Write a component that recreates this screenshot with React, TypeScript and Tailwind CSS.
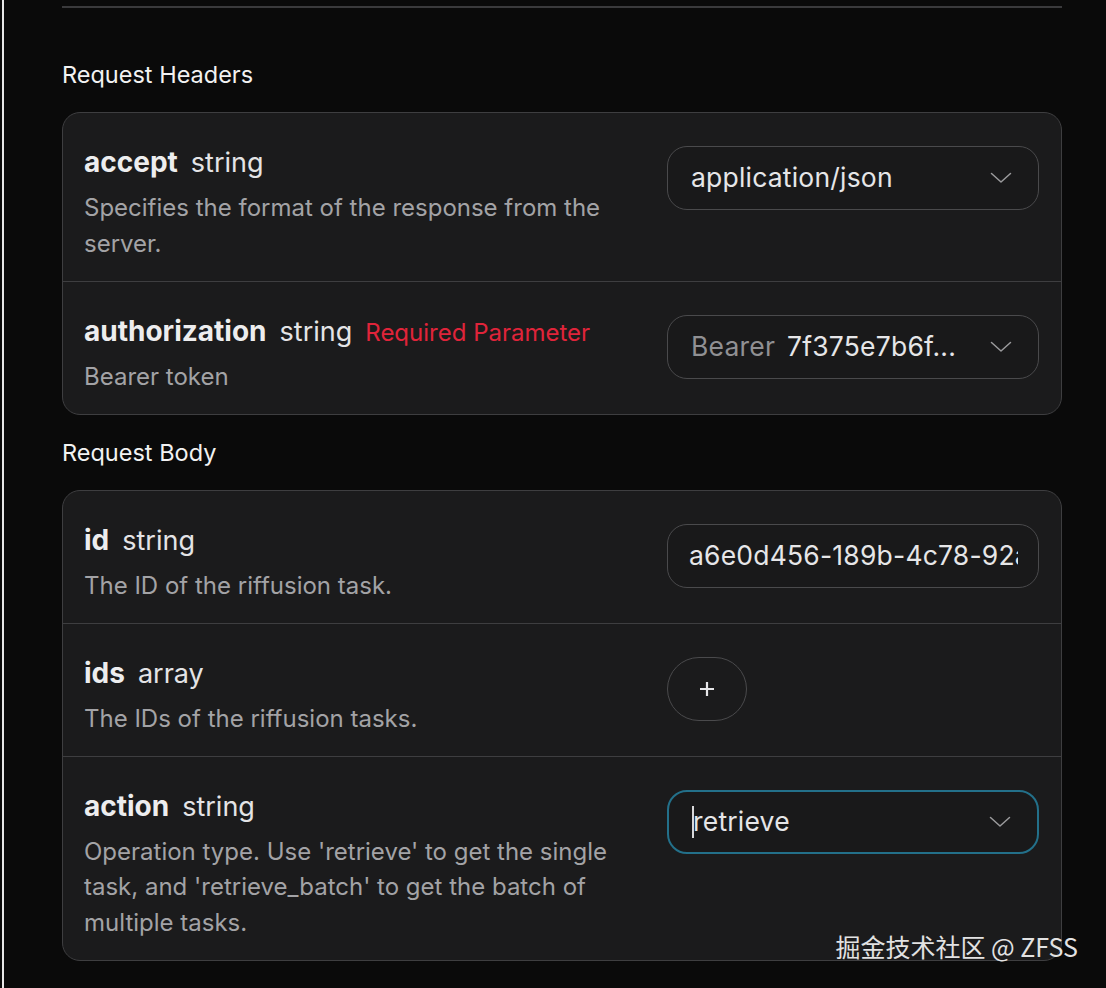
import React from "react";

function Chevron() {
  return (
    <svg width="22" height="12" viewBox="0 0 22 12" fill="none" className="shrink-0">
      <polyline points="1.5,1.5 11,10 20.5,1.5" stroke="#9a9a9c" strokeWidth="1.5" strokeLinecap="round" strokeLinejoin="round" />
    </svg>
  );
}

function Row({
  name,
  type,
  required,
  desc,
  control,
  last,
}: {
  name: string;
  type: string;
  required?: boolean;
  desc: string;
  control: React.ReactNode;
  last?: boolean;
}) {
  return (
    <div className={"flex items-start pl-[21px] pr-[22px] pt-[33px] pb-[19.5px] " + (last ? "" : "border-b border-[#3e3e40]")}>
      <div className="w-[560px] shrink-0">
        <div className="flex items-baseline h-[32px] leading-[32px] whitespace-nowrap">
          <span className="text-[28px] font-bold text-[#ededee]">{name}</span>
          <span className="ml-[13px] text-[27px] text-[#e4e4e6]">{type}</span>
          {required && <span className="ml-[13px] text-[24px] text-[#e0243a]">Required Parameter</span>}
        </div>
        <div className="mt-[12px] text-[24px] leading-[35.5px] text-[#a3a3a6]">{desc}</div>
      </div>
      <div className="ml-auto">{control}</div>
    </div>
  );
}

function Select({ children, focused }: { children: React.ReactNode; focused?: boolean }) {
  return (
    <div
      className={
        "w-[372px] h-[64px] rounded-[20px] flex items-center pl-[23px] pr-[26px] bg-[#19191a] " +
        (focused ? "border-2 border-[#23708a]" : "border border-[#4a4a4c]")
      }
    >
      <div className="flex-1 min-w-0 flex items-center text-[26.5px] tracking-[0.2px] text-[#e6e6e8] whitespace-nowrap overflow-hidden">{children}</div>
      <Chevron />
    </div>
  );
}

export default function App() {
  return (
    <div
      className="relative w-[1106px] h-[988px] bg-[#0a0a0a] overflow-hidden pl-[2px]"
      style={{ fontFamily: "Inter, 'Noto Sans', 'Noto Sans CJK SC', sans-serif" }}
    >
      <div className="h-full border-l-2 border-[#e8e8e8]">
        <div className="ml-[58px] w-[1000px]">
          <div className="pt-[6px]">
            <div className="h-[2px] bg-[#3a3a3c]" />
          </div>

          <div className="mt-[53px] h-[28px] leading-[28px] text-[23.5px] text-[#f2f2f2]">Request Headers</div>
          <div className="mt-[23px] rounded-[18px] border border-[#3e3e40] bg-[#1b1b1c]">
            <Row
              name="accept"
              type="string"
              desc="Specifies the format of the response from the server."
              control={
                <Select>
                  <span>application/json</span>
                </Select>
              }
            />
            <Row
              name="authorization"
              type="string"
              required
              desc="Bearer token"
              last
              control={
                <Select>
                  <span className="text-[#909093]">Bearer</span>
                  <span className="ml-[12px]">7f375e7b6f...</span>
                </Select>
              }
            />
          </div>

          <div className="mt-[24px] h-[28px] leading-[28px] text-[23.5px] text-[#f2f2f2]">Request Body</div>
          <div className="mt-[23px] rounded-[18px] border border-[#3e3e40] bg-[#1b1b1c]">
            <Row
              name="id"
              type="string"
              desc="The ID of the riffusion task."
              control={
                <div className="w-[372px] h-[64px] rounded-[20px] border border-[#4a4a4c] bg-[#19191a] pl-[21px] pr-[20px] flex items-center">
                  <input
                    readOnly
                    value="a6e0d456-189b-4c78-92a1-3f0e"
                    className="w-full bg-transparent outline-none text-[26.5px] tracking-[0.2px] text-[#e6e6e8]"
                    style={{ fontFamily: "Inter, sans-serif" }}
                  />
                </div>
              }
            />
            <Row
              name="ids"
              type="array"
              desc="The IDs of the riffusion tasks."
              control={
                <div className="w-[372px]">
                  <div className="w-[80px] h-[64px] rounded-full border border-[#4a4a4c] flex items-center justify-center">
                    <svg width="18" height="18" viewBox="0 0 18 18">
                      <path d="M9 2v14M2 9h14" stroke="#e6e6e8" strokeWidth="2.2" />
                    </svg>
                  </div>
                </div>
              }
            />
            <Row
              name="action"
              type="string"
              desc="Operation type. Use 'retrieve' to get the single task, and 'retrieve_batch' to get the batch of multiple tasks."
              last
              control={
                <Select focused>
                  <span className="inline-block w-[2px] h-[32px] bg-[#d8d8da] -mr-[1px]" />
                  <span>retrieve</span>
                </Select>
              }
            />
          </div>
        </div>
      </div>

      <div className="absolute right-[28px] top-[928px] text-[25px] leading-[36px] text-[#e2e2e2]" style={{ fontFamily: "'Noto Sans CJK SC', Inter, sans-serif" }}>
        掘金技术社区 @ ZFSS
      </div>
    </div>
  );
}
